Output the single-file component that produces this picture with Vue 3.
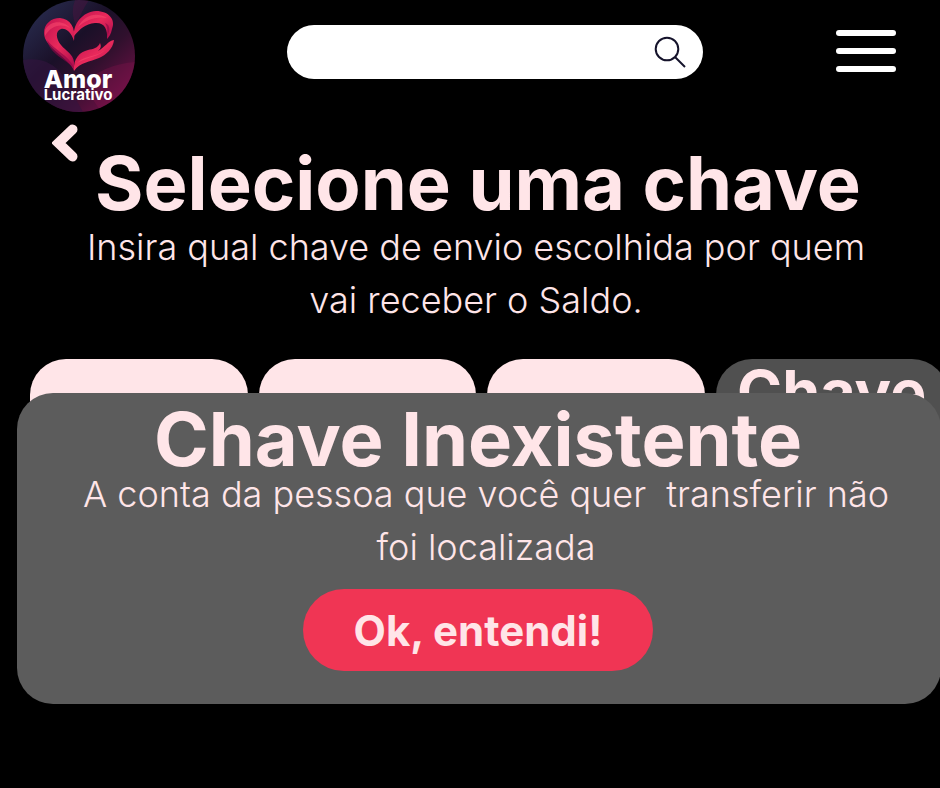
<script setup>
import { ref } from 'vue'

const query = ref('')
const open = ref(true)
const keys = ['', '', '', 'Chave']
</script>

<template>
  <div class="page">
    <header class="topbar">
      <a class="logo" href="#" aria-label="Amor Lucrativo">
        <svg viewBox="0 0 112 112" width="112" height="112">
          <defs>
            <linearGradient id="disc" x1="0.1" y1="0.1" x2="0.85" y2="0.9">
              <stop offset="0" stop-color="#272a4c" />
              <stop offset="0.4" stop-color="#1a1028" />
              <stop offset="0.65" stop-color="#30102d" />
              <stop offset="1" stop-color="#6a1044" />
            </linearGradient>
            <linearGradient id="ribbon" x1="0" y1="0" x2="1" y2="1">
              <stop offset="0" stop-color="#c0104f" />
              <stop offset="0.5" stop-color="#e92a5b" />
              <stop offset="1" stop-color="#a80a4c" />
            </linearGradient>
            <clipPath id="round"><circle cx="56" cy="56" r="56" /></clipPath>
          </defs>
          <g clip-path="url(#round)">
            <rect width="112" height="112" fill="url(#disc)" />
            <path d="M0 60Q26 56 40 76L60 112H0Z" fill="#341440" opacity="0.6" />
            <path d="M52 0Q47 12 53 26Q58 12 66 0Z" fill="#4a1440" opacity="0.5" />
            <path d="M112 62Q82 64 60 84L78 112H112Z" fill="#8a1450" opacity="0.3" />
            <path d="M51 71C47 58 21 48 21 33C21 24 28 18 37 18C47 19 53 27 51 41C48 32 43 28 38 29C32 31 33 39 38 45C43 51 50 54 51 62Z" fill="url(#ribbon)" />
            <path d="M51 36C50 23 60 12 73 11C86 11 93 20 89 29C88 34 86 37 84 39C85 29 81 22 72 23C62 24 57 29 51 36Z" fill="url(#ribbon)" />
            <path d="M51 71C50 58 57 52 65 50C70 49 75 48 77 43C79 47 77 49 75 51C82 47 85 41 91 40C90 49 83 55 76 58C67 62 57 62 51 71Z" fill="url(#ribbon)" />
            <path d="M22 30C28 19 42 21 47 28C37 23 28 26 22 36ZM55 27C62 14 74 12 84 18C73 16 63 20 55 27ZM54 63C61 55 72 58 82 50C77 56 65 57 54 63Z" fill="#f94a70" opacity="0.55" />
            <path d="M24 40C31 50 46 55 51 68C43 60 26 53 24 40ZM82 23C88 25 87 32 84 36C85 30 84 26 82 23Z" fill="#8c0746" opacity="0.65" />
            <text class="logo-name" x="55" y="88" text-anchor="middle">Amor</text>
            <text class="logo-sub" x="55" y="100" text-anchor="middle">Lucrativo</text>
          </g>
        </svg>
      </a>
      <form class="search" role="search" @submit.prevent>
        <input v-model="query" type="search" aria-label="Buscar" />
        <button type="submit" aria-label="Buscar">
          <svg viewBox="0 0 32 32" width="32" height="32" fill="none" stroke="#15132b" stroke-width="2">
            <circle cx="13" cy="13" r="11.3" />
            <path d="M21 21L31 31" />
          </svg>
        </button>
      </form>
      <button class="menu" type="button" aria-label="Menu">
        <span></span><span></span><span></span>
      </button>
    </header>

    <main>
      <button class="back" type="button" aria-label="Voltar">
        <svg viewBox="0 0 26 38" width="26" height="38" fill="none" stroke="#ffe5e8" stroke-width="10" stroke-linecap="round">
          <path d="M20.500 5.500L6.500 19L20.500 32.500" />
        </svg>
      </button>
      <section class="intro">
        <h1>Selecione uma chave</h1>
        <p>Insira qual chave de envio escolhida por quem vai receber o Saldo.</p>
      </section>
      <div class="keys">
        <button v-for="(key, i) in keys" :key="i" type="button" :class="{ other: key }" :aria-label="key || 'Tipo de chave'">{{ key }}</button>
      </div>
      <section v-if="open" class="dialog" role="dialog" aria-labelledby="dialog-title">
        <h2 id="dialog-title">Chave Inexistente</h2>
        <p>A conta da pessoa que você quer&nbsp; transferir não foi localizada</p>
        <button type="button" @click="open = false">Ok, entendi!</button>
      </section>
    </main>
  </div>
</template>

<style>
body {
  margin: 0;
  background: #000;
}
</style>

<style scoped>
.page {
  min-height: 100vh;
  overflow: hidden;
  background: #000;
  color: #ffe5e8;
  font-family: Inter, "Liberation Sans", sans-serif;
}
button {
  border: 0;
  padding: 0;
  background: none;
  color: inherit;
  font-family: inherit;
  cursor: pointer;
}
svg {
  display: block;
}
.topbar {
  display: grid;
  grid-template-columns: minmax(0, 264fr) minmax(0, 416fr) minmax(0, 193fr);
  align-items: start;
  padding: 0 44px 0 23px;
  height: 112px;
}
.logo {
  width: 112px;
}
.logo-name {
  font: 800 25px Inter, sans-serif;
  fill: #fff;
}
.logo-sub {
  font: 700 15px Inter, sans-serif;
  fill: #fff;
}
.search {
  display: flex;
  align-items: center;
  box-sizing: border-box;
  height: 54px;
  margin-top: 25px;
  padding: 0 17px 0 24px;
  border-radius: 27px;
  background: #fff;
}
.search input {
  flex: 1;
  min-width: 0;
  border: 0;
  outline: 0;
  background: transparent;
  font: 24px Inter, sans-serif;
}
.menu {
  display: flex;
  flex-direction: column;
  justify-self: end;
  gap: 12px;
  margin-top: 30px;
}
.menu span {
  width: 60px;
  height: 6px;
  border-radius: 3px;
  background: #fff;
}
.back {
  display: block;
  margin: 12px 0 0 52px;
}
.intro {
  padding: 0 56px 0 60px;
  margin-top: -17px;
  text-align: center;
}
h1,
h2 {
  display: flex;
  justify-content: center;
  margin: 0;
  font-size: 74px;
  font-weight: 700;
  line-height: 76px;
  white-space: nowrap;
}
h1 {
  padding-left: 12px;
}
p {
  margin: 0;
  padding: 0 0 0 8px;
  font-size: 36px;
  font-weight: 350;
  line-height: 53px;
}
.keys {
  display: grid;
  grid-template-columns: 218fr 218fr 218fr 233fr;
  gap: 11px;
  margin: 32px -8px 0 30px;
}
.keys button {
  height: 140px;
  border-radius: 36px;
  background: #ffe5e8;
}
.keys .other {
  display: flex;
  justify-content: center;
  background: #505050;
  font-size: 61px;
  font-weight: 700;
  line-height: 66px;
}
.dialog {
  position: relative;
  margin: -106px -1px 0 17px;
  padding: 8px 42px 33px 40px;
  border-radius: 36px;
  background: #5c5c5c;
  text-align: center;
}
.dialog p {
  margin-top: -9px;
  padding-left: 16px;
}
.dialog button {
  min-width: 350px;
  height: 82px;
  margin-top: 15px;
  border-radius: 41px;
  background: #f03554;
  font-size: 42px;
  font-weight: 700;
}
</style>
